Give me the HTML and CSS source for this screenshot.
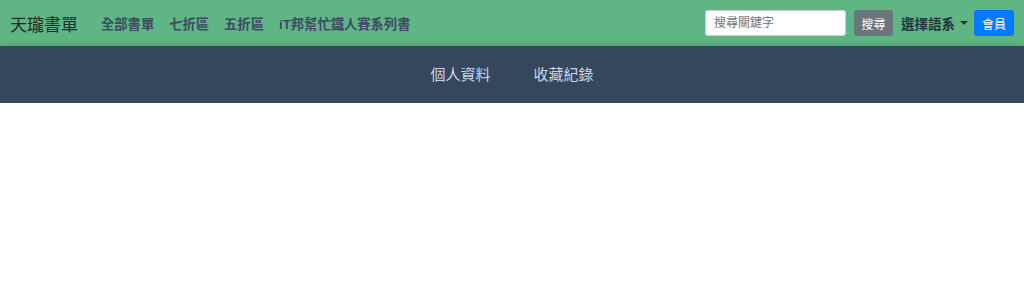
FILE: index.html
```html
<!DOCTYPE html>
<html lang="zh-Hant">
<head>
  <meta charset="UTF-8" />
  <title>天瓏書單</title>
  <link rel="stylesheet" href="styles.css">
</head>
<body>
  <nav class="navbar">
    <a class="brand" href="#">天瓏書單</a>
    <ul class="nav-links">
      <li><a href="#">全部書單</a></li>
      <li><a href="#">七折區</a></li>
      <li><a href="#">五折區</a></li>
      <li><a href="#">iT邦幫忙鐵人賽系列書</a></li>
    </ul>
    <form class="search">
      <input class="search-input" type="text" placeholder="搜尋關鍵字" />
      <button class="btn btn-gray" type="button">搜尋</button>
    </form>
    <a class="lang" href="#">選擇語系<span class="caret"></span></a>
    <button class="btn btn-blue" type="button">會員</button>
  </nav>

  <div class="subnav">
    <a href="#">個人資料</a>
    <a href="#">收藏紀錄</a>
  </div>
</body>
</html>
```

FILE: styles.css
```css
body {
  margin: 0;
  font-family: "Liberation Sans", "Noto Sans CJK TC", sans-serif;
  background-color: #fff;
  color: #212529;
}
.navbar {
  display: flex;
  align-items: center;
  height: 46px;
  padding: 0 10px;
  background-color: #60b585;
  box-sizing: border-box;
}
.brand {
  font-size: 17px;
  color: #1f2a26;
  text-decoration: none;
  margin-right: 23px;
}
.nav-links {
  display: flex;
  gap: 15px;
  list-style: none;
  margin: 0;
  padding: 0;
  flex: 1;
}
.nav-links a {
  display: block;
  font-size: 13.3px;
  font-weight: bold;
  color: #3d4a62;
  text-decoration: none;
}
.search {
  display: flex;
  align-items: center;
  margin: 0;
}
.search-input {
  width: 141px;
  height: 26px;
  box-sizing: border-box;
  padding: 0 8px;
  border: 1px solid #ced4da;
  border-radius: 3px;
  font-size: 12px;
  font-family: inherit;
}
.search-input::placeholder {
  color: #6c757d;
}
.btn {
  height: 26px;
  padding: 0 7.5px;
  border: none;
  border-radius: 3px;
  font-size: 12px;
  font-family: inherit;
  color: #fff;
  cursor: pointer;
}
.btn-gray {
  margin-left: 8px;
  background-color: #6c757d;
}
.btn-blue {
  width: 40px;
  padding: 0;
  background-color: #007bff;
}
.lang {
  display: flex;
  align-items: center;
  margin: 0 6px 0 8px;
  font-size: 13.5px;
  font-weight: bold;
  color: #24343a;
  text-decoration: none;
}
.caret {
  margin-left: 5px;
  border-top: 4px solid #24343a;
  border-left: 4px solid transparent;
  border-right: 4px solid transparent;
}
.subnav {
  display: flex;
  justify-content: center;
  align-items: center;
  gap: 43px;
  height: 57px;
  padding-bottom: 2px;
  box-sizing: border-box;
  background-color: #34475d;
  box-shadow: 0 4px 9px rgba(0,0,0,0.45);
}
.subnav a {
  font-size: 15px;
  color: #c8d5e8;
  text-decoration: none;
}
```
